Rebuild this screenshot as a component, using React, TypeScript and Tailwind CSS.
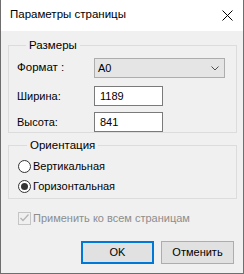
import { useState } from 'react';

const FONT = { fontFamily: '"Liberation Sans", Arial, sans-serif' };

function GroupBox({ title, className, children }: { title: string; className?: string; children: React.ReactNode }) {
  return (
    <fieldset className={`border border-[#dcdcdc] ${className ?? ''}`}>
      <legend className="ml-[9px] px-[3px] text-[11.5px] leading-[14px] text-[#000]">{title}</legend>
      {children}
    </fieldset>
  );
}

function Radio({ label, checked, onClick }: { label: string; checked: boolean; onClick: () => void }) {
  return (
    <button onClick={onClick} className="flex items-center h-[16px] text-left">
      <span className="w-[13px] h-[13px] rounded-full border border-[#333] bg-white grid place-items-center">
        {checked && <span className="w-[7px] h-[7px] rounded-full bg-[#333]" />}
      </span>
      <span className="ml-[2px] text-[11px] leading-[14px] text-[#000]">{label}</span>
    </button>
  );
}

export default function App() {
  const [orient, setOrient] = useState<'v' | 'h'>('h');

  return (
    <div className="w-[244px] h-[274px] border border-t-0 border-[#6e6e6e] bg-[#f0f0f0] flex flex-col" style={FONT}>
      {/* заголовок окна */}
      <div className="h-[31px] bg-white flex items-center justify-between pl-[9px] pr-[9px]">
        <span className="text-[11.5px] text-[#000] -mt-[1px]">Параметры страницы</span>
        <svg width="11" height="11" viewBox="0 0 11 11" className="mr-[1px]">
          <path d="M0.5 0.5 L10.5 10.5 M10.5 0.5 L0.5 10.5" stroke="#000" strokeWidth="1" />
        </svg>
      </div>

      <div className="pl-[7px] pr-[6px]">
        <GroupBox title="Размеры" className="mt-[7px] h-[95px] pl-[8px] pr-[11px]">
          <div className="mt-[6px] flex items-center h-[20px]">
            <span className="w-[77px] text-[11.5px] text-[#000]">Формат :</span>
            <div className="flex-1 h-[20px] border border-[#adadad] bg-[#e5e5e5] flex items-center justify-between pl-[3px] pr-[5px]">
              <span className="text-[11px] text-[#000]">A0</span>
              <svg width="8" height="5" viewBox="0 0 8 5">
                <path d="M0.5 0.5 L4 4 L7.5 0.5" stroke="#505050" fill="none" strokeWidth="1" />
              </svg>
            </div>
          </div>
          <div className="mt-[8px] flex items-center h-[20px]">
            <span className="w-[77px] text-[11px] text-[#000]">Ширина:</span>
            <div className="w-[69px] h-[20px] border border-[#7a7a7a] bg-white flex items-center pl-[5px]">
              <span className="text-[11px] text-[#000]">1189</span>
            </div>
          </div>
          <div className="mt-[6px] flex items-center h-[20px]">
            <span className="w-[77px] text-[11px] text-[#000]">Высота:</span>
            <div className="w-[69px] h-[20px] border border-[#7a7a7a] bg-white flex items-center pl-[5px]">
              <span className="text-[11px] text-[#000]">841</span>
            </div>
          </div>
        </GroupBox>

        <GroupBox title="Ориентация" className="mt-[5px] h-[61px] pl-[9px]">
          <div className="mt-[6px] flex flex-col gap-[4px]">
            <Radio label="Вертикальная" checked={orient === 'v'} onClick={() => setOrient('v')} />
            <Radio label="Горизонтальная" checked={orient === 'h'} onClick={() => setOrient('h')} />
          </div>
        </GroupBox>

        <div className="mt-[11px] ml-[10px] flex items-center">
          <span className="w-[13px] h-[13px] border border-[#c5c5c5] bg-[#f0f0f0] grid place-items-center">
            <svg width="9" height="8" viewBox="0 0 9 8">
              <path d="M0.5 4 L3 6.5 L8.5 0.5" stroke="#b5b5b5" fill="none" strokeWidth="1.3" />
            </svg>
          </span>
          <span className="ml-[2px] text-[11px] text-[#8d8d8d]">Применить ко всем страницам</span>
        </div>

        <div className="mt-[14px] flex justify-end gap-[7px] pr-[3px]">
          <button className="w-[73px] h-[23px] border-2 border-[#0078d7] bg-[#e1e1e1] text-[11px] text-[#000]">OK</button>
          <button className="w-[73px] h-[23px] border border-[#adadad] bg-[#e1e1e1] text-[11px] text-[#000]">Отменить</button>
        </div>
      </div>
    </div>
  );
}
